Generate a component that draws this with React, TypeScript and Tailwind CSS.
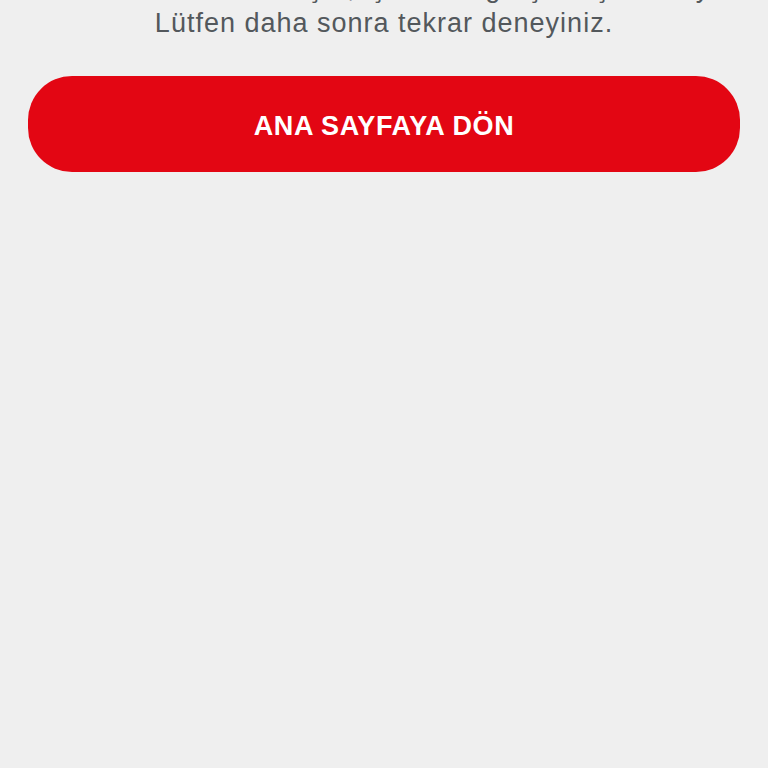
export default function App() {
  return (
    <div className="min-h-[768px] w-full bg-[#efefef] overflow-hidden font-['Liberation_Sans',sans-serif]">
      <div className="px-[28px]">
        <div className="-mt-[29px] text-center text-[27px] leading-[35px] tracking-[1px] text-[#53585c]">
          <p className="whitespace-nowrap">Sistemsel bir hata oluştu, işleminiz gerçekleştirilemiyor.</p>
          <p>Lütfen daha sonra tekrar deneyiniz.</p>
        </div>
        <button className="mt-[35px] flex h-[96px] w-full items-center justify-center rounded-[44px] bg-[#e30613] pt-[4px] text-[27px] font-bold tracking-[0.6px] text-white">
          ANA SAYFAYA DÖN
        </button>
      </div>
    </div>
  );
}
